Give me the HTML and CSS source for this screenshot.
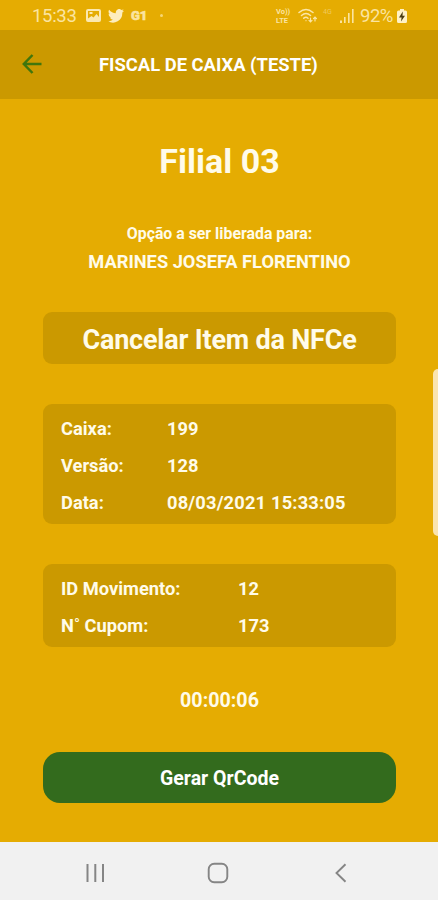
FILE: index.html
```html
<!DOCTYPE html>
<html lang="pt-BR">
<head>
<meta charset="utf-8">
<title>Fiscal de Caixa</title>
<link rel="stylesheet" href="styles.css">
</head>
<body>
<div class="screen">
  <div class="status">
    <span class="clock">15:33</span>
    <svg class="icon-photo" width="15" height="13" viewBox="0 0 15 13">
      <path fill="#fbe8b0" fill-rule="evenodd" d="M2 0h11a2 2 0 0 1 2 2v9a2 2 0 0 1-2 2H2a2 2 0 0 1-2-2V2a2 2 0 0 1 2-2zM2 2v9h11V2z"/>
      <path fill="#fbe8b0" d="M2 9.500 5.500 7l2 1.500L10.500 5 13 8v4H2zM3.500 3h3v2h-3z"/>
    </svg>
    <svg class="icon-bird" width="16" height="14" viewBox="0 0 24 20" preserveAspectRatio="none">
      <path fill="#fdedbd" d="M24 2.400a10 10 0 0 1-2.800.8A5 5 0 0 0 23.300.4a10 10 0 0 1-3.100 1.200A4.900 4.900 0 0 0 11.800 6 14 14 0 0 1 1.700.9a4.900 4.900 0 0 0 1.500 6.600A5 5 0 0 1 1 6.900a4.900 4.900 0 0 0 4 4.900 5 5 0 0 1-2.300.1 4.900 4.900 0 0 0 4.600 3.400A10 10 0 0 1 0 17.300 14 14 0 0 0 21.500 4.900 10 10 0 0 0 24 2.400z"/>
    </svg>
    <span class="news">G1</span>
    <span class="dot"></span>
    <span class="volte"><span>Vo))</span><span>LTE</span></span>
    <svg class="icon-wifi" width="20" height="16" viewBox="0 0 20 16" fill="none" stroke="#fbe6a8" stroke-width="1.500" stroke-linecap="round">
      <path d="M1 4.500Q8 -1.500 15 4.500M3.500 7.500Q8 3.500 12.500 7.500M5.800 10.200Q8 8.500 10 10.200"/>
      <path d="M8 12.500v.2M12.500 10v3.500m-1.500-1.200 1.500 1.500 1.500-1.500M17 13v-3.500m-1.500 1.200L17 9.200l1.500 1.500" stroke-width="1.200"/>
    </svg>
    <span class="net">4G</span>
    <svg class="icon-signal" width="14" height="14" viewBox="0 0 14 14" fill="#fbe4a0">
      <path d="M0 11.500h2V14H0zM4 8h1.600v6H4zM8 4h1.600v10H8zM12 0h1.600v14H12z"/>
    </svg>
    <span class="percent">92%</span>
    <svg class="icon-battery" width="10" height="14" viewBox="0 0 10 14">
      <path fill="#fff1c6" d="M3 0h4v1.500h1.500A1.500 1.500 0 0 1 10 3v9.500A1.500 1.500 0 0 1 8.500 14h-7A1.500 1.500 0 0 1 0 12.500V3a1.500 1.500 0 0 1 1.500-1.500H3z"/>
      <path fill="#4a3b12" d="M5.800 2.500 2 8.400h2.600L4 12.500 8 6.700H5.500z"/>
    </svg>
  </div>
  <header class="bar">
    <svg class="back" width="20" height="20" viewBox="0 0 20 20" fill="none" stroke="#40760c" stroke-width="2.500">
      <path d="M19.500 10H2M10.500 1 1.800 10l8.700 9"/>
    </svg>
    <h1>FISCAL DE CAIXA (TESTE)</h1>
  </header>
  <main class="content">
    <h2 class="branch">Filial 03</h2>
    <p class="hint">Opção a ser liberada para:</p>
    <p class="person">MARINES JOSEFA FLORENTINO</p>
    <section class="card action">Cancelar Item da NFCe</section>
    <dl class="card details">
      <dt>Caixa:</dt><dd>199</dd>
      <dt>Versão:</dt><dd>128</dd>
      <dt>Data:</dt><dd class="date">08/03/2021 15:33:05</dd>
    </dl>
    <dl class="card details movement">
      <dt>ID Movimento:</dt><dd>12</dd>
      <dt>N˚ Cupom:</dt><dd>173</dd>
    </dl>
    <p class="timer">00:00:06</p>
    <button class="generate">Gerar QrCode</button>
  </main>
  <nav class="nav">
    <svg width="20" height="20" viewBox="0 0 20 20" fill="none" stroke="#858585" stroke-width="2"><path d="M3.500 1v18M11.300 1v18M19 1v18"/></svg>
    <svg width="22" height="22" viewBox="0 0 22 22" fill="none" stroke="#858585" stroke-width="1.900"><rect x="1.700" y="1.700" width="18.600" height="18.600" rx="5.500"/></svg>
    <svg width="20" height="20" viewBox="0 0 20 20" fill="none" stroke="#858585" stroke-width="1.900"><path d="M14.500 1.300 5.500 10l9 8.700"/></svg>
  </nav>
  <div class="edge"></div>
</div>
</body>
</html>
```

FILE: styles.css
```css
* { box-sizing: border-box; }
body { margin: 0; font-family: Roboto, sans-serif; color: #fffbe9; }
p, h1, h2, dl, dd { margin: 0; }
svg { display: block; flex: none; }
.screen {
  position: relative;
  width: 438px;
  height: 900px;
  display: flex;
  flex-direction: column;
  background: #e5ac02;
  overflow: hidden;
}
.status {
  height: 30px;
  padding: 1px 31px 0 32px;
  display: flex;
  align-items: center;
  color: #fbe4a0;
  white-space: nowrap;
}
.clock { width: 54px; font-size: 18.500px; letter-spacing: -0.300px; }
.icon-bird { margin-left: 7px; }
.news {
  margin-left: 7px;
  width: 18px;
  font-size: 13px;
  line-height: 12px;
  font-weight: 900;
  -webkit-text-stroke: 0.600px #fbe4a0;
}
.dot { width: 3px; height: 3px; border-radius: 50%; margin-left: 11px; background: #f7d674; }
.volte {
  margin-left: auto;
  width: 16px;
  display: flex;
  flex-direction: column;
  font-size: 7.500px;
  line-height: 9px;
  font-weight: 700;
}
.icon-wifi { margin-left: 6px; }
.net { width: 11px; margin: -7px 0 0 5px; font-size: 7px; color: #f1c95b; }
.icon-signal { margin-left: 6px; }
.percent { margin-left: 6px; width: 33px; font-size: 18.500px; letter-spacing: -0.500px; }
.icon-battery { margin-left: 4px; }
.bar {
  height: 69px;
  padding: 0 22px;
  display: flex;
  align-items: center;
  background: #cb9900;
}
.back { margin-top: -2px; }
.bar h1 { margin-left: 57px; font-size: 18.400px; line-height: 22px; color: #fff; white-space: nowrap; }
.content {
  flex: 1;
  padding: 41px 42px 0 43px;
  display: flex;
  flex-direction: column;
  font-weight: 700;
  text-align: center;
}
.branch { font-size: 34px; line-height: 42px; }
.hint { margin-top: 42px; font-size: 15.850px; line-height: 20px; }
.person { margin-top: 7px; font-size: 18.250px; line-height: 22px; }
.card { border-radius: 9px; background: #cb9900; }
.action { margin-top: 39px; height: 52px; font-size: 27px; line-height: 56px; letter-spacing: -0.200px; }
.details {
  margin-top: 40px;
  height: 120px;
  padding: 6px 18px;
  display: grid;
  grid-template-columns: 106px 1fr;
  grid-auto-rows: 37px;
  line-height: 37px;
  font-size: 18.300px;
  text-align: left;
}
.date { letter-spacing: 0.180px; }
.movement { height: 83px; grid-template-columns: 177px 1fr; }
.timer { margin-top: 42px; font-size: 19.700px; line-height: 24px; }
.generate {
  margin-top: 39px;
  height: 51px;
  padding: 2px 0 0;
  border: 0;
  border-radius: 17px;
  background: #336b1d;
  color: #fff;
  font: 700 19.500px Roboto, sans-serif;
}
.nav {
  height: 58px;
  padding: 4px 87px 0 84px;
  display: flex;
  justify-content: space-between;
  align-items: center;
  background: #f1f1f1;
}
.edge {
  position: absolute;
  top: 369px;
  right: 0;
  width: 5px;
  height: 167px;
  border-radius: 5px 0 0 5px;
  background: #fae4ae;
}
```
